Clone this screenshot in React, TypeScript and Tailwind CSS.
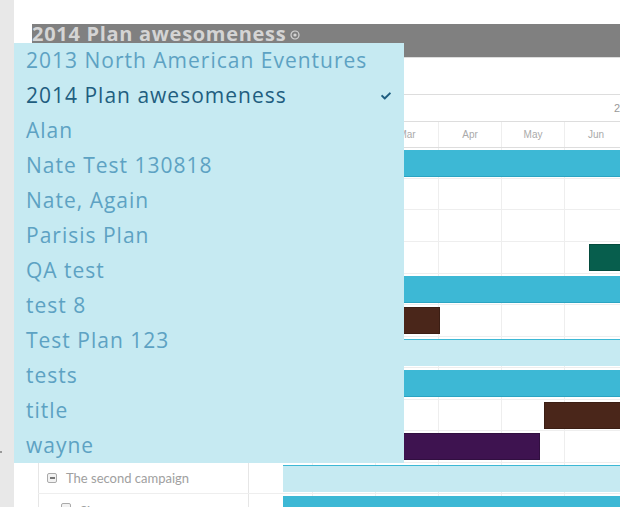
import React from "react";
import { FaCheck } from "react-icons/fa";

const items = [
  "2013 North American Eventures",
  "2014 Plan awesomeness",
  "Alan",
  "Nate Test 130818",
  "Nate, Again",
  "Parisis Plan",
  "QA test",
  "test 8",
  "Test Plan 123",
  "tests",
  "title",
  "wayne",
];

type Bar = { left: number; width: number; color: string };
type Row = { h: number; kind: "teal" | "white" | "band"; bars?: Bar[]; label?: string; indent?: number };

const rows: Row[] = [
  { h: 31, kind: "teal" },
  { h: 31, kind: "white" },
  { h: 32, kind: "white" },
  { h: 32, kind: "white", bars: [{ left: 306, width: 60, color: "#075e4d" }] },
  { h: 31, kind: "teal" },
  { h: 32, kind: "white", bars: [{ left: 95, width: 62, color: "#4a261a" }] },
  { h: 31, kind: "band" },
  { h: 32, kind: "teal" },
  { h: 31, kind: "white", bars: [{ left: 261, width: 100, color: "#4a261a" }] },
  { h: 32, kind: "white", bars: [{ left: 60, width: 197, color: "#3e1350" }] },
  { h: 31, kind: "band", label: "The second campaign", indent: 8 },
  { h: 40, kind: "teal", label: "Site", indent: 22 },
];

const gridX = [29, 92, 155, 218, 281];
const months = [
  { name: "Jan", w: 29 },
  { name: "Feb", w: 63 },
  { name: "Mar", w: 63 },
  { name: "Apr", w: 63 },
  { name: "May", w: 63 },
  { name: "Jun", w: 63 },
];

function MinusBox() {
  return (
    <span className="w-[10px] h-[10px] rounded-[2px] border border-[#aaa] bg-[#f2f2f2] flex items-center justify-center shrink-0">
      <span className="w-[5px] h-[1.5px] bg-[#777]" />
    </span>
  );
}

export default function App() {
  return (
    <div className="relative w-[620px] h-[507px] overflow-hidden bg-white flex font-['Open_Sans',sans-serif]">
      <div className="w-[14px] shrink-0 bg-[#e8e8e8] relative">
        <span className="absolute left-0 top-[451px] w-[2px] h-[2px] bg-[#999]" />
      </div>
      <div className="flex-1 flex flex-col min-w-0">
        <div className="h-[24px] shrink-0" />
        <div className="ml-[18px] h-[33px] shrink-0 bg-[#808080] flex items-start">
          <span className="text-[20px] leading-[20px] font-bold text-[#d4d4d4] tracking-[0.7px]">2014 Plan awesomeness</span>
          <svg className="ml-[4px] mt-[6px]" width="10" height="10" viewBox="0 0 10 10">
            <circle cx="5" cy="5" r="4" fill="none" stroke="#d4d4d4" strokeWidth="1.2" />
            <circle cx="5" cy="5" r="1.6" fill="#d4d4d4" />
          </svg>
        </div>
        <div className="h-px bg-[#dddddd] shrink-0" />
        <div className="h-[36px] shrink-0" />
        {/* gantt */}
        <div className="flex flex-col border-t border-[#dddddd]">
          {/* year row */}
          <div className="flex h-[27px] border-b border-[#dddddd]">
            <div className="w-[269px] shrink-0" />
            <div className="flex-1 relative overflow-hidden">
              <span className="absolute left-[331px] top-[7px] text-[11px] leading-[13px] text-[#999] font-['Liberation_Sans',sans-serif]">2014</span>
            </div>
          </div>
          {/* month row */}
          <div className="flex h-[26px] border-b border-[#dddddd]">
            <div className="w-[269px] shrink-0" />
            <div className="flex-1 flex overflow-hidden">
              {months.map((m, i) => (
                <div
                  key={m.name}
                  style={{ width: m.w }}
                  className={`shrink-0 flex items-center justify-center text-[10px] text-[#aaa] font-['Liberation_Sans',sans-serif] ${i > 0 ? "border-l border-[#eeeeee]" : ""}`}
                >
                  {m.name}
                </div>
              ))}
            </div>
          </div>
          {/* body */}
          <div className="flex relative">
            <div className="w-[24px] shrink-0" />
            <div className="w-[245px] shrink-0 flex flex-col">
              {rows.map((r, i) => (
                <div key={i} style={{ height: r.h }} className="flex border-b border-[#eeeeee]">
                  <div className="w-[211px] border-l border-r border-[#e6e6e6] flex items-center gap-[9px]" style={{ paddingLeft: r.indent ?? 8, alignItems: r.h > 35 ? "flex-start" : "center", paddingTop: r.h > 35 ? 9 : 0 }}>
                    {r.label && (
                      <>
                        <MinusBox />
                        <span className="text-[13px] text-[#a0a0a0] font-['Lato',sans-serif] leading-[16px]">{r.label}</span>
                      </>
                    )}
                  </div>
                  <div className="flex-1" />
                </div>
              ))}
            </div>
            <div className="flex-1 relative flex flex-col">
              {gridX.map((x) => (
                <div key={x} className="absolute top-0 bottom-0 w-px bg-[#eeeeee]" style={{ left: x }} />
              ))}
              {rows.map((r, i) => (
                <div key={i} style={{ height: r.h }} className="relative shrink-0 border-b border-[#eeeeee]">
                  {r.kind === "teal" && (
                    <div className="mt-[2px] h-[27px] bg-[#3db8d5] border-b border-[#2ba4c2]" />
                  )}
                  {r.kind === "band" && (
                    <div className="mt-[2px] h-[27px] bg-[#c6eaf2] border-t border-[#3db8d5]" />
                  )}
                  {r.bars?.map((b, j) => (
                    <div
                      key={j}
                      className="absolute top-[2px] h-[27px] border border-black/20"
                      style={{ left: b.left, width: b.width, background: b.color }}
                    />
                  ))}
                </div>
              ))}
            </div>
          </div>
        </div>
      </div>
      {/* dropdown */}
      <div className="absolute left-[14px] top-[43px] w-[390px] h-[420px] bg-[#c6eaf2] flex flex-col">
        {items.map((it) => {
          const sel = it === "2014 Plan awesomeness";
          return (
            <div key={it} className="h-[35px] flex items-center pl-[12px] pr-[13px] justify-between">
              <span className={`text-[21px] leading-[28px] -mt-[2px] tracking-[1px] ${sel ? "text-[#1f5e80]" : "text-[#5da2c3]"}`}>{it}</span>
              {sel && <FaCheck className="text-[#1f5e80]" size={10} />}
            </div>
          );
        })}
      </div>
    </div>
  );
}
